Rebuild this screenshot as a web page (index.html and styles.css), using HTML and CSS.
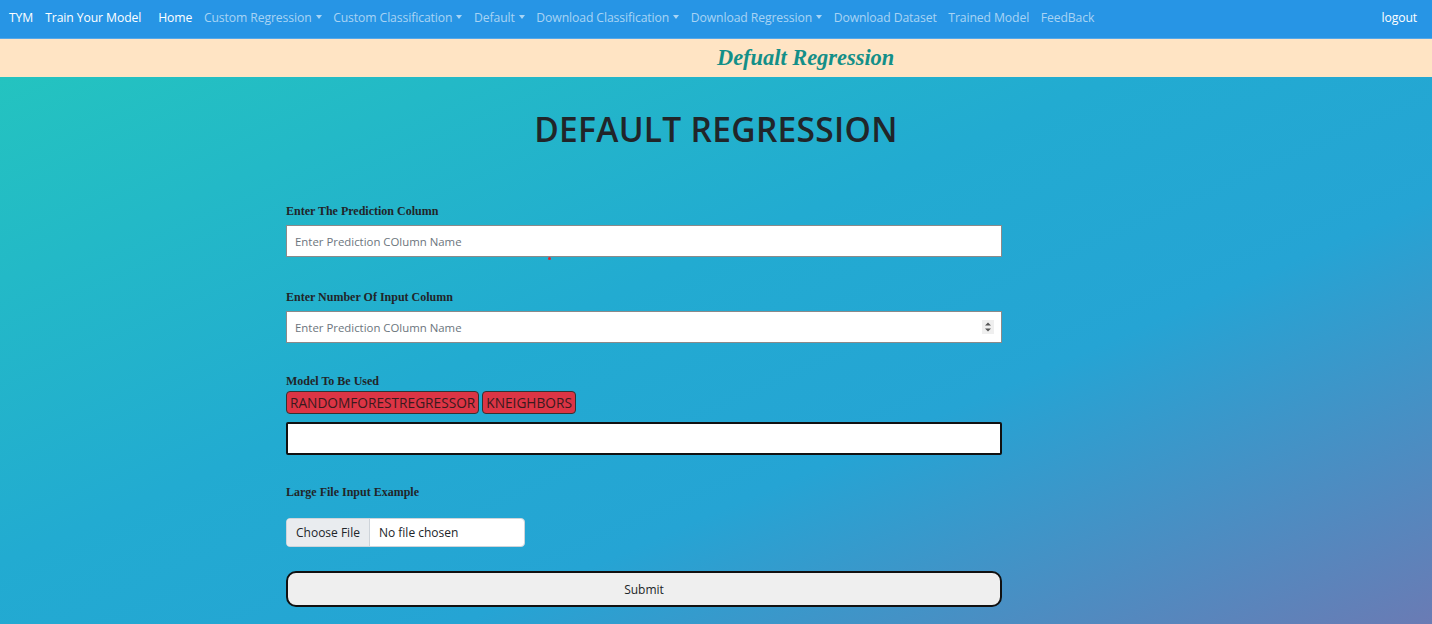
FILE: index.html
```html
<!DOCTYPE html>
<html>
<head>
<meta charset="utf-8">
<link rel="stylesheet" href="styles.css">
</head>
<body>
<nav class="navbar">
  <a class="brand">TYM</a>
  <a class="brand">Train Your Model</a>
  <ul class="nav">
    <li class="active">Home</li>
    <li class="dd">Custom Regression</li>
    <li class="dd">Custom Classification</li>
    <li class="dd">Default</li>
    <li class="dd">Download Classification</li>
    <li class="dd">Download Regression</li>
    <li>Download Dataset</li>
    <li>Trained Model</li>
    <li>FeedBack</li>
  </ul>
  <a class="logout">logout</a>
</nav>
<div class="banner"><span>Defualt Regression</span></div>
<main class="page">
  <h1>DEFAULT REGRESSION</h1>
  <form class="form">
    <div class="group first">
      <label>Enter The Prediction Column</label>
      <div class="field-wrap">
        <input class="field" type="text" placeholder="Enter Prediction COlumn Name">
        <span class="dot"></span>
      </div>
    </div>
    <div class="group">
      <label>Enter Number Of Input Column</label>
      <div class="field num">
        <span class="ph">Enter Prediction COlumn Name</span>
        <span class="spin"><svg width="8" height="12" viewBox="0 0 8 12"><path d="M1 4.5 L4 1.5 L7 4.5Z M1 7.5 L4 10.5 L7 7.5Z" fill="#555"/></svg></span>
      </div>
    </div>
    <div class="group models">
      <label>Model To Be Used</label>
      <div class="tags">
        <span class="tag">RANDOMFORESTREGRESSOR</span>
        <span class="tag">KNEIGHBORS</span>
      </div>
      <div class="field thick"></div>
    </div>
    <div class="group upload">
      <label>Large File Input Example</label>
      <div class="file">
        <span class="choose">Choose File</span>
        <span class="nofile">No file chosen</span>
      </div>
    </div>
    <div class="submit">Submit</div>
  </form>
</main>
</body>
</html>
```
FILE: styles.css
```css
* { box-sizing: border-box; }
html, body { margin: 0; height: 100%; }
body {
  font-family: "Open Sans", "Noto Sans", sans-serif;
  background: linear-gradient(to bottom right, #24c7bd 0%, #22abd1 45%, #25a4d4 66%, #6a7bb4 100%);
  min-height: 624px;
  overflow: hidden;
}
.navbar {
  height: 38px;
  background: #2795e5;
  display: flex;
  align-items: center;
  padding: 0 15px 3px 9px;
  font-size: 12.2px;
  letter-spacing: -0.1px;
}
.brand { color: #fff; margin-right: 12px; }
.nav {
  list-style: none;
  display: flex;
  margin: 0 0 0 5px;
  padding: 0;
  gap: 11.6px;
}
.nav li { color: rgba(255,255,255,0.6); white-space: nowrap; }
.nav li.active { color: #fff; }
.nav li.dd::after {
  content: "";
  display: inline-block;
  margin-left: 4px;
  vertical-align: 3px;
  border-top: 4px solid currentColor;
  border-left: 3.5px solid transparent;
  border-right: 3.5px solid transparent;
}
.logout { margin-left: auto; color: #fff; }
.banner {
  height: 39px;
  background: #ffe4c4;
  border-top: 1px solid #55a8e8;
  display: flex;
  align-items: center;
  padding-left: 717px;
}
.banner span {
  font-family: "Liberation Serif", serif;
  font-style: italic;
  font-weight: bold;
  font-size: 22.4px;
  color: #138f88;
}
.page { display: flex; flex-direction: column; }
h1 {
  align-self: center;
  margin: 30px 0 0;
  font-size: 33.5px;
  font-weight: 600;
  color: #212529;
  letter-spacing: 0.3px;
  line-height: 44px;
}
.form { width: 716px; margin: 53px 0 0 286px; }
.group { margin-bottom: 31px; }
.group.first { margin-bottom: 33px; }
.group label {
  display: block;
  font-family: "Liberation Serif", serif;
  font-weight: bold;
  font-size: 12px;
  color: #212529;
  margin-bottom: 6px;
}
.field-wrap { position: relative; }
.field {
  display: flex;
  align-items: center;
  width: 100%;
  height: 32px;
  border: 1px solid #8a8a8a;
  background: #fff;
  padding: 0 8px;
  font-family: "Open Sans", sans-serif;
  font-size: 11.4px;
  outline: none;
}
.field::placeholder { color: #6c757d; }
.ph { color: #6c757d; flex: 1; }
.spin {
  width: 12px; height: 14px;
  background: #efefef;
  display: flex; align-items: center; justify-content: center;
  margin-right: -1px;
}
.dot {
  position: absolute;
  left: 262px; top: 32px;
  width: 3px; height: 3px;
  border-radius: 50%;
  background: #e3242b;
}
.models { margin-bottom: 30px; }
.models label { margin-bottom: 2px; }
.tags { display: flex; gap: 3px; margin-bottom: 8px; }
.tag {
  background: #dc3545;
  border: 1px solid #333;
  border-radius: 4px;
  color: #3a1a1d;
  font-size: 13.7px;
  padding: 0 3px;
  height: 23px;
  line-height: 22px;
}
.field.thick {
  height: 33px;
  border: 2px solid #111;
  border-radius: 2px;
}
.upload { margin-bottom: 24px; }
.upload label { margin-bottom: 18px; }
.file {
  display: flex;
  width: 239px;
  height: 29px;
  border: 1px solid #ced4da;
  border-radius: 4px;
  overflow: hidden;
  background: #fff;
  font-size: 12px;
  color: #212529;
}
.choose {
  background: #e9ecef;
  border-right: 1px solid #ced4da;
  padding: 0 9px;
  display: flex; align-items: center;
}
.nofile { padding: 0 9px; display: flex; align-items: center; }
.submit {
  height: 36px;
  background: #efefef;
  border: 2px solid #111;
  border-radius: 10px;
  display: flex; align-items: center; justify-content: center;
  font-size: 12px;
  color: #212529;
}
```
